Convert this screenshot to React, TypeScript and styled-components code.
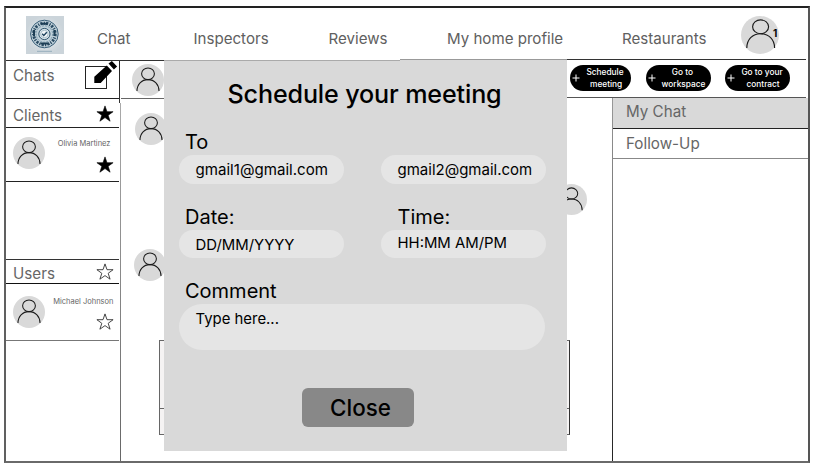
import React from 'react';
import styled, { createGlobalStyle } from 'styled-components';

const Global = createGlobalStyle`
  * { box-sizing: border-box; }
  body { margin: 0; background: #fff; font-family: Inter, "Liberation Sans", sans-serif; }
  svg { display: block; flex: none; }
`;

const Frame = styled.div`
  position: relative;
  width: 806px;
  height: 457px;
  margin: 6px 0 0 4px;
  display: flex;
  flex-direction: column;
  background: #fff;
  border-style: solid;
  border-width: 2px;
  border-color: #222 #555 #6a6a6a #606060;
`;

const Header = styled.header`
  height: 51px;
  flex: none;
  display: flex;
  align-items: flex-start;
  padding: 8px 0 0 20px;
`;

const NavLink = styled.a<{ $gap: number; $width: number }>`
  margin-left: ${(p) => p.$gap}px;
  width: ${(p) => p.$width}px;
  padding-top: 13px;
  font-size: 15.1px;
  line-height: 20px;
  color: #606060;
  white-space: nowrap;
`;

const ProfileSlot = styled.div`
  position: relative;
  margin-left: 33px;
`;

const Badge = styled.span`
  position: absolute;
  left: 32px;
  top: 11px;
  font-size: 10px;
  line-height: 12px;
  font-weight: 700;
`;

const HeaderRule = styled.div`
  display: flex;
  flex: none;
  width: 800px;
  height: 2px;
`;

const RuleSegment = styled.i<{ $width: number; $color: string; $low?: boolean; $under?: string }>`
  width: ${(p) => p.$width}px;
  height: 2px;
  border-top: 1px solid ${(p) => (p.$low ? '#fff' : p.$color)};
  border-bottom: 1px solid ${(p) => (p.$low ? p.$color : p.$under ?? '#fff')};
`;

const Body = styled.div`
  flex: 1;
  display: grid;
  grid-template-columns: 113px 2px 1fr;
`;

const Divider = styled.div`
  background:
    linear-gradient(#222, #333) 0 0 / 1px 42px no-repeat,
    linear-gradient(#aaa, #666) 1px 42px / 1px 358px no-repeat;
`;

const Sidebar = styled.aside`
  display: flex;
  flex-direction: column;
`;

const Section = styled.div<{ $height: number; $line?: string }>`
  height: ${(p) => p.$height}px;
  border-bottom: 1px solid ${(p) => p.$line ?? '#222'};
  display: flex;
  align-items: flex-start;
  justify-content: space-between;
  padding: 0 5px 0 7px;
`;

const Heading = styled.h2<{ $top: number }>`
  margin: ${(p) => p.$top}px 0 0;
  font-size: 15.2px;
  line-height: 20px;
  font-weight: 400;
  color: #666;
`;

const EditSlot = styled.div`
  margin-right: -5px;
`;

const IconSlot = styled.div<{ $top: number }>`
  margin-top: ${(p) => p.$top}px;
`;

const ContactInfo = styled.div<{ $top: number; $gap: number; $shift: number }>`
  flex: 1;
  display: flex;
  flex-direction: column;
  align-items: flex-end;
  gap: ${(p) => p.$gap}px;
  padding-top: ${(p) => p.$top}px;

  span {
    margin-right: ${(p) => p.$shift}px;
    font-size: 7.5px;
    line-height: 10px;
    color: #666;
    white-space: nowrap;
  }
`;

const Content = styled.div`
  display: flex;
  flex-direction: column;
`;

const Toolbar = styled.div`
  height: 37px;
  display: flex;
  align-items: flex-start;
`;

const ToolbarContact = styled.div`
  width: 446px;
  height: 38px;
  border-bottom: 1px solid #666;
  padding: 3px 0 0 11px;
`;

const Actions = styled.div`
  flex: 1;
  height: 37px;
  margin-right: 2px;
  border-bottom: 1px solid #555;
  display: flex;
  padding: 4px 0 0 3px;
`;

const ActionButton = styled.button<{ $width: number; $gap?: number }>`
  width: ${(p) => p.$width}px;
  height: 26px;
  margin: 0 ${(p) => p.$gap ?? 0}px 0 0;
  padding: 0 0 0 2px;
  display: flex;
  align-items: center;
  border: 0;
  border-radius: 13px;
  background: #000;
  color: #fff;
  font: 500 8.3px/12.5px Inter, sans-serif;
`;

const ActionLabel = styled.span<{ $shift: number }>`
  flex: 1;
  margin-left: ${(p) => p.$shift}px;
  text-align: center;
  white-space: pre;
`;

const Workspace = styled.div`
  flex: 1;
  display: grid;
  grid-template-columns: 491px 1fr;
`;

const Conversation = styled.main`
  display: flex;
  flex-direction: column;
  padding-left: 13px;
`;

const Message = styled.div<{ $top: number; $indent?: number }>`
  margin-top: ${(p) => p.$top}px;
  padding-left: ${(p) => p.$indent ?? 0}px;
`;

const Composer = styled.div`
  width: 411px;
  height: 95px;
  margin: 59px 0 0 25px;
  border: 1px solid #666;
  border-right-color: #333;
  background: #f5f3f3;
`;

const ComposerInput = styled.div`
  height: 68px;
  border-bottom: 1px solid #666;
`;

const ChatList = styled.section`
  border-left: 1px solid;
  border-image: linear-gradient(#999, #555 60%, #222) 1;
`;

const ChatItem = styled.div<{ $active?: boolean; $height: number }>`
  height: ${(p) => p.$height}px;
  padding: ${(p) => (p.$active ? 4 : 5)}px 0 0 13px;
  background: ${(p) => (p.$active ? '#d9d9d9' : '#fff')};
  border-bottom: 1px solid ${(p) => (p.$active ? '#222' : '#888')};
  font-size: 15.2px;
  line-height: 20px;
  color: #666;
`;

const Modal = styled.form`
  position: absolute;
  left: 158px;
  top: 53px;
  width: 403px;
  height: 390px;
  background: #d9d9d9;
  display: flex;
  flex-direction: column;
`;

const Title = styled.h1`
  margin: 17px 0 0 63.5px;
  font-size: 25.1px;
  line-height: 32px;
  font-weight: 500;
  letter-spacing: -0.13px;
  white-space: nowrap;
`;

const FieldGrid = styled.div`
  display: grid;
  grid-template-columns: 165px 165px;
  column-gap: 37px;
  padding-left: 15px;
`;

const Field = styled.label<{ $top: number }>`
  display: flex;
  flex-direction: column;
  padding-top: ${(p) => p.$top}px;
`;

const Label = styled.span<{ $indent?: number }>`
  height: 26px;
  padding-left: ${(p) => p.$indent ?? 6}px;
  font-size: 20px;
  line-height: 26px;
`;

const Pill = styled.span<{ $drop?: number; $size: number }>`
  height: 28.5px;
  padding-left: 16.5px;
  border-radius: 15px;
  background: #e5e5e5;
  font-size: ${(p) => p.$size}px;
  line-height: ${(p) => 29 + (p.$drop ?? 0)}px;
  white-space: nowrap;
`;

const CommentField = styled.label`
  display: flex;
  flex-direction: column;
  padding: 20px 0 0 15px;
`;

const CommentBox = styled.span`
  width: 366px;
  height: 46px;
  padding: 5px 0 0 16.5px;
  border-radius: 23px;
  background: #e5e5e5;
  font-size: 14.9px;
  line-height: 20px;
`;

const CloseButton = styled.button`
  width: 112px;
  height: 39px;
  margin: 38px 0 0 138px;
  padding: 0 0 0 5px;
  border: 0;
  border-radius: 6px;
  background: #888;
  color: #000;
  font: 500 22.4px/39px Inter, sans-serif;
`;

function Avatar({ size = 32 }: { size?: number }) {
  return (
    <svg width={size} height={size} viewBox="0 0 32 32" fill="none" stroke="#1a1a1a" strokeWidth="1.05">
      <circle cx="16" cy="16" r="16" fill="#d9d9d9" stroke="none" />
      <ellipse cx="16" cy="9.8" rx="6.4" ry="5.8" />
      <path d="M5 27C5 20.5 9.5 15.6 16 15.6S27 20.5 27 27" />
    </svg>
  );
}

function ProfileAvatar() {
  return (
    <svg width="38" height="38" viewBox="0 0 38 38" fill="none" stroke="#1a1a1a" strokeWidth="1.15">
      <circle cx="19" cy="19" r="19" fill="#d9d9d9" stroke="none" />
      <ellipse cx="19.6" cy="10.8" rx="8" ry="6.9" />
      <path d="M5.8 32C5.8 23.5 11.5 17.7 19.6 17.7S33.6 23.5 33.6 32" />
    </svg>
  );
}

function Star({ filled }: { filled?: boolean }) {
  return (
    <svg width="18" height="17" viewBox="0 0 18 17">
      <path
        d="M9 .9l2 5.8h6.1l-4.9 3.6 1.9 5.9L9 12.6l-5.1 3.6 1.9-5.9L.9 6.7H7z"
        fill={filled ? '#000' : 'none'}
        stroke={filled ? '#000' : '#333'}
        strokeWidth={filled ? 0.6 : 0.9}
      />
    </svg>
  );
}

function EditIcon() {
  return (
    <svg width="35" height="30" viewBox="0 0 35 30">
      <rect x="1.5" y="5.5" width="21" height="22" fill="none" stroke="#222" />
      <path d="M10.3 15.7 22.8 4.6l5.2 5.4-11.3 12h-6.4zM24.5 2.5l3.4-2.5 5.2 5.6-3.2 2.8z" fill="#000" />
    </svg>
  );
}

function Plus() {
  return (
    <svg width="8" height="8" viewBox="0 0 8 8" stroke="#fff" strokeWidth="1">
      <path d="M4 .5v7M.5 4h7" />
    </svg>
  );
}

function Logo() {
  return (
    <svg width="38" height="38" viewBox="0 0 38 38" fill="none">
      <defs>
        <radialGradient id="plate">
          <stop offset="0" stopColor="#edf2f4" />
          <stop offset="1" stopColor="#cbd4da" />
        </radialGradient>
      </defs>
      <path d="M0 0h38v38H0z" fill="url(#plate)" />
      <circle cx="18.4" cy="18" r="13.8" stroke="#375d77" strokeWidth="1" fill="#c0d1da" />
      <circle cx="18.4" cy="18" r="10.8" stroke="#2b4c64" strokeWidth="3" strokeDasharray="2.2 1.3 1.2 1.1" />
      <circle cx="18.4" cy="18" r="8.2" stroke="#7c9cae" strokeWidth="1" strokeDasharray="2 1" />
      <circle cx="18.4" cy="18" r="5.6" stroke="#31566f" strokeWidth="1" fill="#dce8ed" />
      <circle cx="18.4" cy="18" r="3.7" stroke="#8aa7b7" strokeWidth=".7" fill="#f2f7f9" />
      <path d="M15 7.8h6.5M14.5 27.5h8M8 14v6M28.5 14v6" stroke="#1d3e55" strokeWidth="2" />
      <path d="m16.2 17.8 1.6 1.7 3-3.2" stroke="#173e59" strokeWidth="1.3" />
      <path d="M11 35.3h15" stroke="#8fa8b7" strokeWidth=".9" />
    </svg>
  );
}

export default function App() {
  return (
    <>
      <Global />
      <Frame>
        <Header>
          <Logo />
          <NavLink $gap={33} $width={36}>Chat</NavLink>
          <NavLink $gap={60.5} $width={76}>Inspectors</NavLink>
          <NavLink $gap={59} $width={60}>Reviews</NavLink>
          <NavLink $gap={58.5} $width={117}>My home profile</NavLink>
          <NavLink $gap={58} $width={86}>Restaurants</NavLink>
          <ProfileSlot>
            <ProfileAvatar />
            <Badge>1</Badge>
          </ProfileSlot>
        </Header>
        <HeaderRule>
          <RuleSegment $width={158} $color="#333" $low />
          <RuleSegment $width={236} $color="#aaa" $low />
          <RuleSegment $width={167} $color="#999" $under="#d9d9d9" />
          <RuleSegment $width={239} $color="#333" />
        </HeaderRule>
        <Body>
          <Sidebar>
            <Section $height={38}>
              <Heading $top={5}>Chats</Heading>
              <EditSlot><EditIcon /></EditSlot>
            </Section>
            <Section $height={29}>
              <Heading $top={7}>Clients</Heading>
              <IconSlot $top={6}><Star filled /></IconSlot>
            </Section>
            <Section $height={54}>
              <IconSlot $top={9}><Avatar /></IconSlot>
              <ContactInfo $top={11} $gap={7} $shift={3.5}>
                <span>Olivia Martinez</span>
                <Star filled />
              </ContactInfo>
            </Section>
            <Section $height={78} $line="#333" />
            <Section $height={24} $line="#111">
              <Heading $top={4}>Users</Heading>
              <IconSlot $top={3}><Star /></IconSlot>
            </Section>
            <Section $height={57} $line="#777">
              <IconSlot $top={12}><Avatar /></IconSlot>
              <ContactInfo $top={13} $gap={6} $shift={0.5}>
                <span>Michael Johnson</span>
                <Star />
              </ContactInfo>
            </Section>
          </Sidebar>
          <Divider />
          <Content>
            <Toolbar>
              <ToolbarContact><Avatar /></ToolbarContact>
              <Actions>
                <ActionButton $width={61} $gap={14.5} type="button">
                  <Plus /><ActionLabel $shift={-1}>{'Schedule\n meeting'}</ActionLabel>
                </ActionButton>
                <ActionButton $width={65} $gap={14.5} type="button">
                  <Plus /><ActionLabel $shift={1}>{'Go to \nworkspace'}</ActionLabel>
                </ActionButton>
                <ActionButton $width={65} type="button">
                  <Plus /><ActionLabel $shift={-1}>{'Go to your\n contract'}</ActionLabel>
                </ActionButton>
              </Actions>
            </Toolbar>
            <Workspace>
              <Conversation>
                <Message $top={15} $indent={1}><Avatar /></Message>
                <Message $top={39} $indent={422}><Avatar size={31} /></Message>
                <Message $top={34}><Avatar /></Message>
                <Composer><ComposerInput /></Composer>
              </Conversation>
              <ChatList>
                <ChatItem $active $height={31}>My Chat</ChatItem>
                <ChatItem $height={30}>Follow-Up</ChatItem>
              </ChatList>
            </Workspace>
          </Content>
        </Body>
        <Modal>
          <Title>Schedule your meeting</Title>
          <FieldGrid>
            <Field $top={19}>
              <Label>To</Label>
              <Pill $size={15.1}>gmail1@gmail.com</Pill>
            </Field>
            <Field $top={45}>
              <Pill $size={15}>gmail2@gmail.com</Pill>
            </Field>
            <Field $top={20}>
              <Label>Date:</Label>
              <Pill $size={14.9} $drop={2}>DD/MM/YYYY</Pill>
            </Field>
            <Field $top={20}>
              <Label $indent={16.5}>Time:</Label>
              <Pill $size={14.9} $drop={-2}>HH:MM AM/PM</Pill>
            </Field>
          </FieldGrid>
          <CommentField>
            <Label>Comment</Label>
            <CommentBox>Type here...</CommentBox>
          </CommentField>
          <CloseButton type="button">Close</CloseButton>
        </Modal>
      </Frame>
    </>
  );
}
